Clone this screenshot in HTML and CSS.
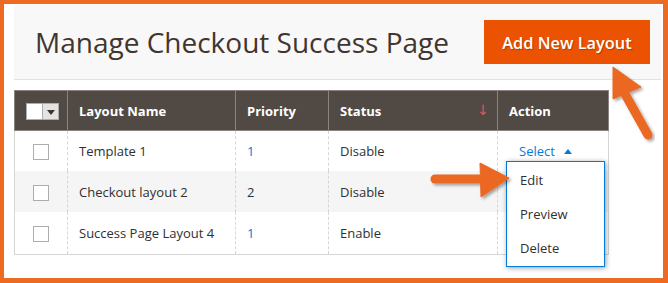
FILE: index.html
```html
<!DOCTYPE html>
<html lang="en">

<head>
    <meta charset="UTF-8">
    <title>Manage Checkout Success Page</title>
    <link rel="stylesheet" href="styles.css">
</head>

<body>
    <div class="frame">
        <div class="page-header">
            <h1 class="page-title">Manage Checkout Success Page</h1>
            <button class="primary-button">Add New Layout</button>
        </div>

        <table class="grid">
            <colgroup>
                <col style="width: 53px">
                <col style="width: 168px">
                <col style="width: 93px">
                <col style="width: 169px">
                <col style="width: 111px">
            </colgroup>
            <thead>
                <tr>
                    <th class="col-check">
                        <span class="mass-select"><span class="mass-box"></span><span class="mass-toggle"></span></span>
                    </th>
                    <th>Layout Name</th>
                    <th>Priority</th>
                    <th class="sorted">Status <span class="sort-arrow">&#8595;</span></th>
                    <th>Action</th>
                </tr>
            </thead>
            <tbody>
                <tr>
                    <td class="col-check"><span class="checkbox"></span></td>
                    <td>Template 1</td>
                    <td class="link">1</td>
                    <td>Disable</td>
                    <td class="col-action">
                        <div class="action-select">
                            Select <span class="caret"></span>
                            <ul class="action-menu">
                                <li>Edit</li>
                                <li>Preview</li>
                                <li>Delete</li>
                            </ul>
                        </div>
                    </td>
                </tr>
                <tr class="odd">
                    <td class="col-check"><span class="checkbox"></span></td>
                    <td>Checkout layout 2</td>
                    <td>2</td>
                    <td>Disable</td>
                    <td class="col-action"></td>
                </tr>
                <tr>
                    <td class="col-check"><span class="checkbox"></span></td>
                    <td>Success Page Layout 4</td>
                    <td class="link">1</td>
                    <td>Enable</td>
                    <td class="col-action"></td>
                </tr>
            </tbody>
        </table>
    </div>

    <!-- callout arrows drawn over the screenshot -->
    <svg class="callouts" width="668" height="283" viewBox="0 0 668 283">
        <defs>
            <filter id="shadow" x="-20%" y="-20%" width="140%" height="140%">
                <feDropShadow dx="2" dy="2" stdDeviation="1.6" flood-color="#000" flood-opacity="0.35" />
            </filter>
        </defs>
        <g filter="url(#shadow)" fill="#ea6724" stroke="#ea6724">
            <line x1="648" y1="135" x2="625" y2="94" stroke-width="9" stroke-linecap="round" />
            <polygon points="613,67 613,99 641,87" stroke-width="1" stroke-linejoin="round" />
        </g>
        <g filter="url(#shadow)" fill="#ea6724" stroke="#ea6724">
            <line x1="435" y1="179" x2="484" y2="179" stroke-width="9" stroke-linecap="round" />
            <polygon points="480,163 509,178 481,197" stroke-width="1" stroke-linejoin="round" />
        </g>
    </svg>
</body>

</html>
```

FILE: styles.css
```css
body {
    font-family: "Open Sans", "DejaVu Sans", sans-serif;
    margin: 0;
    width: 668px;
    height: 283px;
    position: relative;
    overflow: hidden;
    color: #303030;
}

.frame {
    box-sizing: border-box;
    width: 668px;
    height: 283px;
    background: #fff;
    border: 4px solid #ec6a22;
    border-right-width: 5px;
    border-bottom-width: 5px;
}

.page-header {
    display: flex;
    align-items: center;
    justify-content: space-between;
    height: 74px;
    margin: 1px 2px 0 10px;
    padding: 0 11px 0 21px;
    background: #f8f8f8;
    border-bottom: 1px solid #e3e3e3;
}

.page-title {
    margin: 0;
    font-size: 28px;
    font-weight: 400;
    color: #41362f;
    line-height: 1;
}

.primary-button {
    width: 166px;
    height: 44px;
    border: none;
    background-color: #eb5202;
    color: #fff;
    font-family: inherit;
    font-size: 16.4px;
    font-weight: 600;
    text-shadow: 1px 1px 1px rgba(0, 0, 0, 0.25);
    padding: 0;
}

.grid {
    margin: 10px 0 0 10px;
    width: 594px;
    table-layout: fixed;
    border-collapse: collapse;
    font-size: 13px;
}

.grid th {
    height: 39px;
    padding: 0 11px;
    text-align: left;
    background-color: #514943;
    color: #fff;
    font-weight: 700;
    border: 1px solid #8a837f;
}

.grid th.sorted {
    position: relative;
}

.sort-arrow {
    position: absolute;
    right: 8px;
    top: 9px;
    color: #e8525a;
    font-weight: 400;
    font-size: 14px;
}

.grid td {
    height: 41px;
    padding: 0 11px;
    border-left: 1px dashed #d6d6d6;
    border-right: 1px dashed #d6d6d6;
}

.grid tbody tr:first-child td {
    height: 40px;
}

.grid td:first-child {
    border-left: 1px solid #d6d6d6;
}

.grid td:last-child {
    border-right: 1px solid #d6d6d6;
}

.grid tbody tr:last-child td {
    border-bottom: 1px solid #d6d6d6;
    height: 42px;
}

.grid tr.odd td {
    background-color: #f5f5f5;
}

.grid td.link {
    color: #007bdb;
}

.grid .col-check {
    padding: 0;
    text-align: center;
}

.checkbox {
    display: inline-block;
    vertical-align: middle;
    width: 14px;
    height: 14px;
    border: 1px solid #adadad;
    background: #fff;
}

.mass-select {
    display: inline-flex;
    vertical-align: middle;
    margin-left: 2px;
    border: 1px solid #adadad;
}

.mass-box {
    width: 15px;
    height: 15px;
    background: #fff;
}

.mass-toggle {
    width: 15px;
    height: 15px;
    background: #e3e3e3;
    border-left: 1px solid #adadad;
    position: relative;
}

.mass-toggle::after {
    content: "";
    position: absolute;
    left: 4px;
    top: 6px;
    border-left: 4px solid transparent;
    border-right: 4px solid transparent;
    border-top: 5px solid #41362f;
}

.grid .col-action {
    padding-left: 21px;
}

.action-select {
    position: relative;
    color: #007bdb;
    line-height: 18px;
}

.caret {
    display: inline-block;
    margin-left: 6px;
    vertical-align: 2px;
    border-left: 4px solid transparent;
    border-right: 4px solid transparent;
    border-bottom: 5px solid #007bdb;
}

.action-menu {
    position: absolute;
    left: -13px;
    top: calc(100% + 1px);
    z-index: 5;
    box-sizing: border-box;
    width: 99px;
    height: 106px;
    margin: 0;
    padding: 1px 0 0;
    list-style: none;
    background: #fff;
    border: 1px solid #007bdb;
    box-shadow: 1px 1px 5px rgba(0, 0, 0, 0.4);
}

.action-menu li {
    height: 34px;
    line-height: 34px;
    padding-left: 13px;
    color: #303030;
}

.callouts {
    position: absolute;
    left: 0;
    top: 0;
    pointer-events: none;
    z-index: 10;
}
```
